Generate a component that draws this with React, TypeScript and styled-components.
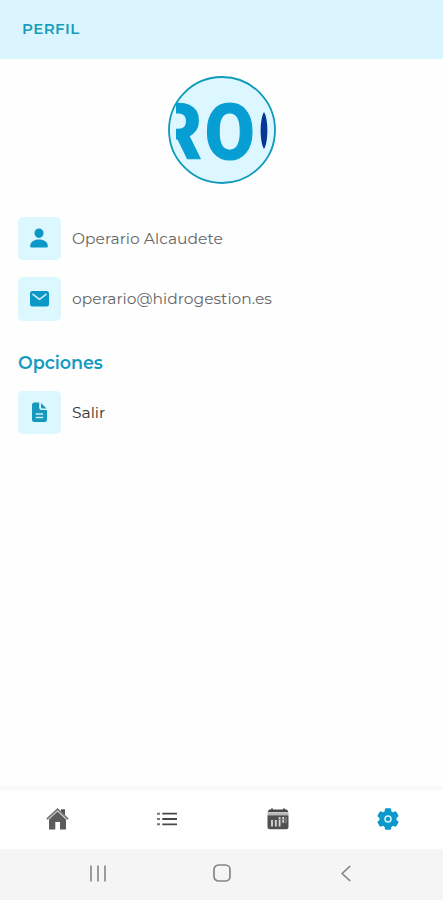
import React from 'react';
import styled, { createGlobalStyle } from 'styled-components';

const Global = createGlobalStyle`
  * { box-sizing: border-box; }
  body { margin: 0; background: #fefefe; font-family: Montserrat, Inter, sans-serif; }
`;

const Screen = styled.div`
  height: 900px;
  display: flex;
  flex-direction: column;
  background: #fefefe;
  overflow: hidden;
`;

const Header = styled.header`
  height: 58.5px;
  flex: none;
  display: flex;
  align-items: center;
  padding: 0 22px 1.5px;
  background: #dbf5fe;
`;

const Title = styled.h1`
  margin: 0;
  font-size: 15px;
  line-height: 20px;
  font-weight: 600;
  letter-spacing: 0.45px;
  color: #159dbb;
`;

const Content = styled.main`
  flex: 1;
  display: flex;
  flex-direction: column;
  padding: 17.5px 18px 0;
`;

const Avatar = styled.div`
  align-self: center;
  width: 108px;
  height: 108px;
  margin-left: 1px;
  svg { display: block; }
`;

const List = styled.div<{ $top: number }>`
  display: flex;
  flex-direction: column;
  gap: 17px;
  margin-top: ${p => p.$top}px;
`;

const Row = styled.div`
  display: flex;
  align-items: center;
  height: 43.5px;
`;

const Tile = styled.div`
  width: 43px;
  height: 43.5px;
  border-radius: 5px;
  background: #ddf7ff;
  display: flex;
  align-items: center;
  justify-content: center;
  padding-right: 1px;
`;

const Label = styled.span<{ $strong?: boolean }>`
  margin: 1px 0 0 11px;
  font-size: 15.5px;
  line-height: 20px;
  font-weight: 400;
  letter-spacing: ${p => (p.$strong ? 0 : 0.02)}px;
  color: ${p => (p.$strong ? '#333' : '#666')};
  white-space: nowrap;
`;

const Section = styled.h2`
  margin: 31px 0 0;
  font-size: 17.5px;
  line-height: 22px;
  font-weight: 600;
  letter-spacing: -0.03px;
  color: #159bc0;
`;

const Tabs = styled.nav`
  height: 63px;
  flex: none;
  display: grid;
  grid-template-columns: repeat(4, 1fr);
  place-items: center;
  padding: 0 0 1px 2px;
  border-top: 4px solid #f9f9f9;
  background: #fff;
`;

const SystemBar = styled.footer`
  height: 51px;
  flex: none;
  display: grid;
  grid-template-columns: repeat(3, 124px);
  justify-content: center;
  place-items: center;
  padding: 0 0 3px 1px;
  background: #f5f5f5;
`;

const Glyph = styled.svg`
  display: block;
  overflow: visible;
`;

const Lettering = styled.text`
  font-family: Roboto, sans-serif;
  font-weight: 800;
  font-size: 77px;
  fill: #079fd3;
  stroke: #079fd3;
  stroke-width: 1.2px;
  stroke-linejoin: round;
`;

const Logo = () => (
  <svg width="108" height="108" viewBox="0 0 108 108">
    <defs>
      <clipPath id="logo-window"><rect x="8" y="8" width="92" height="92" /></clipPath>
    </defs>
    <circle cx="54" cy="54" r="53" fill="#dcf7ff" stroke="#0f9abb" strokeWidth="1.8" />
    <g clipPath="url(#logo-window)">
      <Lettering x="-14" y="83" textLength="48" lengthAdjust="spacingAndGlyphs">R</Lettering>
      <Lettering x="36.7" y="83" textLength="50" lengthAdjust="spacingAndGlyphs">O</Lettering>
    </g>
    <path d="M96 36C91.5 43 91.5 66 96 73C100.5 66 100.5 43 96 36Z" fill="#073795" />
  </svg>
);

const PersonIcon = () => (
  <Glyph width="18" height="20" viewBox="0 0 18 20" fill="#0b98c7">
    <ellipse cx="9" cy="5.2" rx="4.5" ry="4.8" />
    <path d="M0.2 18.2C0.2 14.1 4 11.6 9 11.6S17.8 14.1 17.8 18.2Q17.8 19.4 16.6 19.4H1.4Q0.2 19.4 0.2 18.2Z" />
  </Glyph>
);

const MailIcon = () => (
  <Glyph width="19" height="16" viewBox="0 0 19 16">
    <rect width="19" height="15.5" rx="2.5" fill="#0b98c7" />
    <path d="M3 3.3L9.5 8.3L16 3.3" fill="none" stroke="#d1f3fe" strokeWidth="1.5" strokeLinecap="round" strokeLinejoin="round" />
  </Glyph>
);

const DocumentIcon = () => (
  <Glyph width="15" height="20" viewBox="0 0 15 20">
    <path d="M2.5 0.5H7.2V5.8Q7.2 8 9.4 8H15V17.5Q15 20 12.5 20H2.5Q0 20 0 17.5V3Q0 0.5 2.5 0.5Z" fill="#1599be" />
    <path d="M9 1L14.5 6.5H10.5Q9 6.5 9 5Z" fill="#1599be" />
    <path d="M3.7 12H11.2M3.7 15.5H11.2" stroke="#c5effa" strokeWidth="1.5" />
  </Glyph>
);

const HomeIcon = () => (
  <Glyph width="23" height="22" viewBox="0 0 23 22">
    <path d="M15 1.2H19V9L15 5Z" fill="#555" />
    <path d="M3 10.5L11.5 3L20 10.5V21.5H14V14H9.3V21.5H3Z" fill="#5c5c5c" />
    <path d="M1.5 11.5L11.5 2L21.5 11.5" fill="none" stroke="#ddd" strokeWidth="2.4" />
    <path d="M0.8 11.1L11.5 1.2L22.2 11.1" fill="none" stroke="#777" strokeWidth="1.7" />
  </Glyph>
);

const ListIcon = () => (
  <Glyph width="20" height="14" viewBox="0 0 20 14" fill="none">
    <path d="M0 1.7H3M0 7H3M0 12.3H3" stroke="#777" strokeWidth="2" />
    <path d="M5.3 1.7H20M5.3 7H20M5.3 12.3H20" stroke="#484848" strokeWidth="1.8" />
  </Glyph>
);

const CalendarIcon = () => (
  <Glyph width="22" height="22" viewBox="0 0 22 22">
    <path d="M2 1.5H4V0.5H6V1.5H16V0.5H18V1.5H20L21.5 4.3H0.5Z" fill="#484848" />
    <path d="M0.5 4.8H21.5V7H0.5Z" fill="#b8b8b8" />
    <path d="M0.5 7.3H21.5V19Q21.5 21.3 19.2 21.3H2.8Q0.5 21.3 0.5 19Z" fill="#515151" />
    <path d="M5 12V18.5M8.8 12V18.5M12.6 9V18.5M16.2 9V15" stroke="#d8d8d8" strokeWidth="1.8" />
    <path d="M11 11.5H18.5M14 14.8H18.5" stroke="#777" strokeWidth="0.8" />
    <path d="M19 9V15" stroke="#999" strokeWidth="1" />
  </Glyph>
);

const GearIcon = () => (
  <Glyph width="22" height="22" viewBox="0 0 22 22">
    <g fill="#0b98ca">
      <circle cx="11" cy="11" r="8.6" />
      <rect x="7.8" y="0.2" width="6.4" height="21.6" rx="1.3" />
      <rect x="7.8" y="0.2" width="6.4" height="21.6" rx="1.3" transform="rotate(60 11 11)" />
      <rect x="7.8" y="0.2" width="6.4" height="21.6" rx="1.3" transform="rotate(120 11 11)" />
    </g>
    <circle cx="11" cy="11" r="3" fill="#0b98ca" stroke="#d9f4fc" strokeWidth="1.5" />
  </Glyph>
);

const RecentsIcon = () => (
  <Glyph width="16" height="17" viewBox="0 0 16 17">
    <path d="M1 0.5V16.5M8 0.5V16.5M15 0.5V16.5" stroke="#8b8b8b" strokeWidth="1.7" />
  </Glyph>
);

const HomeKeyIcon = () => (
  <Glyph width="18" height="18" viewBox="0 0 18 18">
    <rect x="1" y="1" width="16" height="16" rx="4.5" fill="none" stroke="#858585" strokeWidth="1.7" />
  </Glyph>
);

const BackIcon = () => (
  <Glyph width="10" height="17" viewBox="0 0 10 17">
    <path d="M9.2 1L1.2 8.5L9.2 16" fill="none" stroke="#858585" strokeWidth="1.7" />
  </Glyph>
);

export default function App() {
  return (
    <Screen>
      <Global />
      <Header><Title>PERFIL</Title></Header>
      <Content>
        <Avatar><Logo /></Avatar>
        <List $top={32.5}>
          <Row><Tile><PersonIcon /></Tile><Label>Operario Alcaudete</Label></Row>
          <Row><Tile><MailIcon /></Tile><Label>operario@hidrogestion.es</Label></Row>
        </List>
        <Section>Opciones</Section>
        <List $top={17}>
          <Row><Tile><DocumentIcon /></Tile><Label $strong>Salir</Label></Row>
        </List>
      </Content>
      <Tabs><HomeIcon /><ListIcon /><CalendarIcon /><GearIcon /></Tabs>
      <SystemBar><RecentsIcon /><HomeKeyIcon /><BackIcon /></SystemBar>
    </Screen>
  );
}
